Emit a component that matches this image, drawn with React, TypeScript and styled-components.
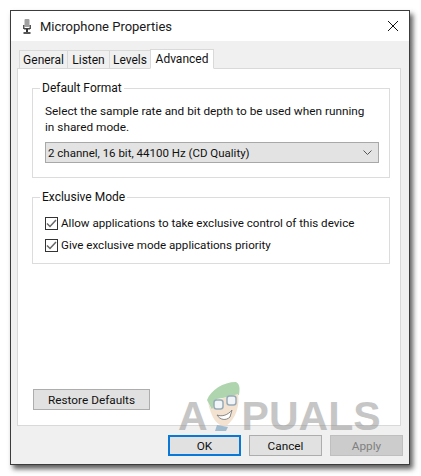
import React from "react";
import styled, { createGlobalStyle } from "styled-components";

const Global = createGlobalStyle`
  html, body {
    margin: 0;
    padding: 0;
    background: #fff;
  }
  body {
    width: 421px;
    height: 476px;
    overflow: hidden;
    font-family: Roboto, "Liberation Sans", sans-serif;
    font-size: 12px;
    color: #111;
  }
`;

const Page = styled.div`
  width: 421px;
  height: 476px;
  padding: 10px 11px 11px 10px;
  box-sizing: border-box;
`;

const Dialog = styled.div`
  position: relative;
  width: 400px;
  height: 455px;
  box-sizing: border-box;
  display: flex;
  flex-direction: column;
  background: #f0f0f0;
  border: 1px solid #3c3c3c;
  box-shadow: 3px 4px 5px rgba(40, 40, 40, 0.75);
`;

const TitleBar = styled.div`
  height: 30px;
  flex: none;
  display: flex;
  align-items: center;
  background: #fff;
  padding: 0 11px 0 12px;
  font-size: 13px;
  color: #1a1a1a;
`;

const TitleText = styled.span`
  margin-left: 9px;
  flex: 1;
`;

const Body = styled.div`
  flex: 1;
  display: flex;
  flex-direction: column;
  padding: 7px 8px 0 6px;
`;

const TabRow = styled.div`
  display: flex;
  align-items: flex-end;
  height: 20px;
  padding-left: 2px;
  position: relative;
  z-index: 1;
`;

const Tab = styled.div<{ $active?: boolean; $w: number }>`
  width: ${(p) => p.$w}px;
  height: ${(p) => (p.$active ? 20 : 18)}px;
  box-sizing: border-box;
  display: flex;
  align-items: center;
  justify-content: center;
  background: ${(p) => (p.$active ? "#fff" : "#f0f0f0")};
  border: 1px solid #d9d9d9;
  border-bottom: ${(p) => (p.$active ? "1px solid #fff" : "none")};
  margin-right: -1px;
  margin-bottom: ${(p) => (p.$active ? -1 : 0)}px;
  font-size: 12px;
`;

const Panel = styled.div`
  height: 358px;
  box-sizing: border-box;
  background: #fff;
  border: 1px solid #d9d9d9;
  padding: 19px 10px 15px 14px;
  display: flex;
  flex-direction: column;
`;

const Group = styled.fieldset<{ $h: number; $mb?: number }>`
  margin: 0 0 ${(p) => p.$mb ?? 0}px;
  padding: 0;
  height: ${(p) => p.$h}px;
  box-sizing: border-box;
  border: 1px solid #dcdcdc;
  position: relative;
`;

const Legend = styled.span`
  position: absolute;
  top: -9px;
  left: 7px;
  padding: 0 2px;
  background: #fff;
  font-size: 12px;
  line-height: 16px;
`;

const GroupText = styled.p`
  margin: 0;
  padding: 14px 20px 0 12px;
  font-size: 11.8px;
  line-height: 16px;
`;

const Combo = styled.div`
  margin: 7px 10px 0 12px;
  height: 21px;
  box-sizing: border-box;
  display: flex;
  align-items: center;
  justify-content: space-between;
  padding: 0 6px 0 2px;
  background: #e3e3e3;
  border: 1px solid #a8a8a8;
  font-size: 11.5px;
`;

const CheckList = styled.div`
  padding: 18px 12px 0;
  display: flex;
  flex-direction: column;
  gap: 8px;
`;

const CheckRow = styled.label`
  display: flex;
  align-items: center;
  gap: 3px;
  height: 14px;
  font-size: 11.6px;
`;

const Box = styled.span`
  width: 13px;
  height: 13px;
  box-sizing: border-box;
  border: 1px solid #333;
  background: #fff;
  display: flex;
  align-items: center;
  justify-content: center;
  flex: none;
`;

const Spacer = styled.div`
  flex: 1;
`;

const Button = styled.button<{ $w: number; $primary?: boolean; $disabled?: boolean }>`
  width: ${(p) => p.$w}px;
  height: 21px;
  box-sizing: border-box;
  padding: 0;
  font-family: inherit;
  font-size: 11.8px;
  color: ${(p) => (p.$disabled ? "#808080" : "#111")};
  background: ${(p) => (p.$disabled ? "#cccccc" : "#e1e1e1")};
  border: ${(p) =>
    p.$primary
      ? "2px solid #0a78d7"
      : p.$disabled
        ? "1px solid #bfbfbf"
        : "1px solid #adadad"};
`;

const RestoreButton = styled(Button)`
  margin-left: 1px;
`;

const Footer = styled.div`
  flex: 1;
  display: flex;
  justify-content: flex-end;
  align-items: flex-start;
  gap: 8px;
  padding-top: 9px;
  margin-right: -2px;
`;

const Watermark = styled.div`
  position: absolute;
  left: 167px;
  top: 370px;
  display: flex;
  align-items: flex-end;
  pointer-events: none;
`;

const WatermarkText = styled.span`
  color: #8f8f8f;
  opacity: 0.5;
  font-family: "Liberation Sans", sans-serif;
  font-weight: 700;
  font-size: 41px;
  line-height: 32px;
  margin-bottom: 2px;
`;

const MascotSlot = styled.span`
  display: block;
  margin-left: -6px;
  opacity: 0.8;
`;

const MicIcon = () => (
  <svg width="8" height="15" viewBox="0 0 8 15">
    <rect x="1.500" y="0" width="5" height="8" rx="1" fill="#a0a0a0" />
    <rect x="0" y="6" width="1.500" height="4" fill="#555" />
    <rect x="6.500" y="6" width="1.500" height="4" fill="#555" />
    <rect x="1" y="9" width="6" height="1.500" fill="#444" />
    <rect x="3" y="10" width="2" height="3" fill="#333" />
    <rect x="0.500" y="13" width="7" height="2" fill="#555" />
  </svg>
);

const CloseIcon = () => (
  <svg width="10" height="10" viewBox="0 0 10 10">
    <path d="M0 0L10 10M10 0L0 10" stroke="#111" strokeWidth="1" fill="none" />
  </svg>
);

const Chevron = () => (
  <svg width="9" height="5" viewBox="0 0 9 5">
    <path d="M.5.500L4.500 4.500L8.500.500" stroke="#555" strokeWidth="1" fill="none" />
  </svg>
);

const Tick = () => (
  <svg width="11" height="9" viewBox="0 0 11 9">
    <path d="M1 4.500L4 7.500L10 1" stroke="#666" strokeWidth="1.500" fill="none" />
  </svg>
);

const Mascot = () => (
  <svg width="40" height="50" viewBox="0 0 40 50">
    <path d="M5 19C9 9 21 1 34 1C38 3 38 8 37 14L15 18L10 29Z" fill="#9ccb9c" />
    <path d="M6 21L10 29L15 19L36 13C38 24 34 38 24 45C15 46 9 36 6 21Z" fill="#f0dcc4" />
    <rect x="12" y="19" width="9" height="9" rx="2.500" fill="#eef3f6" stroke="#7f97a8" strokeWidth="1.500" />
    <rect x="25" y="15" width="9" height="9" rx="2.500" fill="#eef3f6" stroke="#7f97a8" strokeWidth="1.500" />
    <path d="M15 34C20 36 26 34 30 29L28 36C24 40 18 39 15 34Z" fill="#fff" stroke="#6a6a6a" strokeWidth="1" />
    <path d="M15 44L26 46L24 50L13 50Z" fill="#8fb0c8" />
  </svg>
);

const tabs = [
  { label: "General", w: 49 },
  { label: "Listen", w: 43 },
  { label: "Levels", w: 42 },
];

export default function App() {
  return (
    <Page>
      <Global />
      <Dialog>
        <TitleBar>
          <MicIcon />
          <TitleText>Microphone Properties</TitleText>
          <CloseIcon />
        </TitleBar>
        <Body>
          <TabRow>
            {tabs.map((t) => (
              <Tab key={t.label} $w={t.w}>
                {t.label}
              </Tab>
            ))}
            <Tab $active $w={64}>
              Advanced
            </Tab>
          </TabRow>
          <Panel>
            <Group $h={90} $mb={19}>
              <Legend>Default Format</Legend>
              <GroupText>
                Select the sample rate and bit depth to be used when running in shared mode.
              </GroupText>
              <Combo>
                2 channel, 16 bit, 44100 Hz (CD Quality)
                <Chevron />
              </Combo>
            </Group>
            <Group $h={67}>
              <Legend>Exclusive Mode</Legend>
              <CheckList>
                <CheckRow>
                  <Box>
                    <Tick />
                  </Box>
                  Allow applications to take exclusive control of this device
                </CheckRow>
                <CheckRow>
                  <Box>
                    <Tick />
                  </Box>
                  Give exclusive mode applications priority
                </CheckRow>
              </CheckList>
            </Group>
            <Spacer />
            <RestoreButton $w={117}>Restore Defaults</RestoreButton>
          </Panel>
          <Footer>
            <Button $w={73} $primary>
              OK
            </Button>
            <Button $w={73}>Cancel</Button>
            <Button $w={73} $disabled>
              Apply
            </Button>
          </Footer>
        </Body>
        <Watermark>
          <WatermarkText>A</WatermarkText>
          <MascotSlot>
            <Mascot />
          </MascotSlot>
          <WatermarkText>PUALS</WatermarkText>
        </Watermark>
      </Dialog>
    </Page>
  );
}
